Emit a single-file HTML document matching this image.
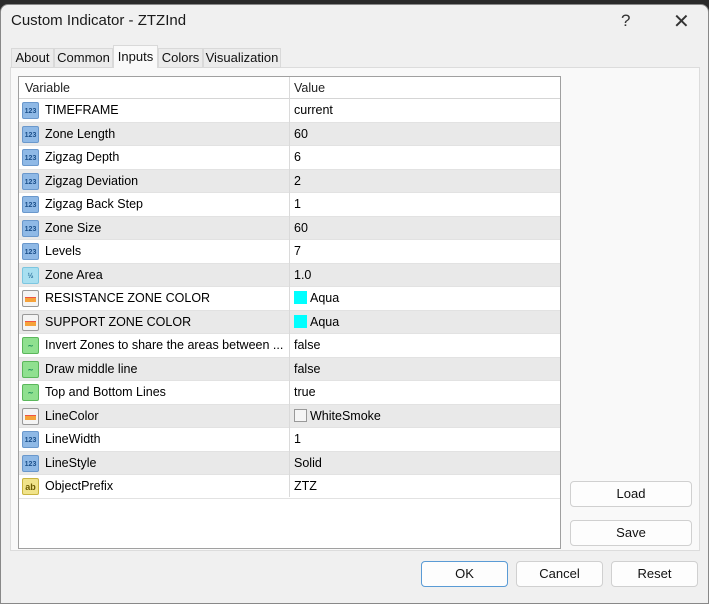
<!DOCTYPE html>
<html><head><style>
*{margin:0;padding:0;box-sizing:border-box}
body{width:709px;height:600px;background:#2a2a2a;font-family:"Liberation Sans",sans-serif;font-size:12.5px;color:#000;position:relative;overflow:hidden}
.dlg{position:absolute;left:0;top:4px;width:709px;height:600px;background:#f0f0f0;border-radius:8px 8px 0 0;border:1px solid #888}
.title{position:absolute;left:10px;top:7px;font-size:15px;color:#1a1a1a}
.q{position:absolute;left:620px;top:6px;font-size:17px;color:#333}
.x{position:absolute;left:672px;top:4px;font-size:20px;color:#333}
.tab{position:absolute;top:48px;height:20px;background:#ebebeb;border:1px solid #d9d9d9;font-size:13px;line-height:18px;text-align:center;color:#111}
.tab.sel{top:45px;height:23px;line-height:22px;background:#f9f9f9;border-bottom:none;z-index:2}
.panel{position:absolute;left:10px;top:67px;width:690px;height:484px;background:#f9f9f9;border:1px solid #dcdcdc}
.tbl{position:absolute;left:18px;top:76px;width:543px;height:473px;background:#fff;border:1px solid #a0a0a0;overflow:hidden}
.row{position:absolute;left:0;width:541px;height:23.5px;border-bottom:1px solid #e2e2e2}
.row.g{background:#e9e9e9}
.row span{position:absolute;top:4px}
.c1{left:26px}.c2{left:275px}
.hdr{position:absolute;left:0;top:0;width:541px;height:22px;border-bottom:1px solid #d5d5d5}
.hdr span{position:absolute;top:4px;color:#222}
.vl{position:absolute;left:270px;top:0;width:1px;height:420px;background:#dadada}
.ic{position:absolute;left:3px;top:3px;width:17px;height:17px;border-radius:2px;font-size:7px;font-weight:bold;text-align:center;line-height:17px}
.n{background:#8fb9e6;border:1px solid #6a98cc;color:#1b4f8a}
.f{background:#a8dff0;border:1px solid #7cc6e0;color:#2a6f9a}
.c{background:#f4f4f4;border:1px solid #999}
.c i{position:absolute;left:2px;top:6px;width:11px;height:5px;background:#f5a23a;border-top:1px solid #e54}
.b{background:#8fe08f;border:1px solid #5bb75b;color:#185}
.s{background:#f0e38a;border:1px solid #c9b440;color:#6a5a00;font-size:9px}
.sw{display:inline-block;width:13px;height:13px;vertical-align:-2px;margin-right:3px}
.btn{position:absolute;height:26px;background:#fdfdfd;border:1px solid #d0d0d0;border-radius:4px;text-align:center;line-height:24px;font-size:13px;color:#111}
</style></head><body>
<div class="dlg">
<div class="title">Custom Indicator - ZTZInd</div>
<div class="q">?</div><div class="x">✕</div>
</div>
<div class="panel"></div>
<div class="tab" style="left:11px;width:43px">About</div>
<div class="tab" style="left:54px;width:59px">Common</div>
<div class="tab sel" style="left:113px;width:45px">Inputs</div>
<div class="tab" style="left:158px;width:45px">Colors</div>
<div class="tab" style="left:203px;width:78px">Visualization</div>
<div class="tbl">
<div class="hdr"><span style="left:6px">Variable</span><span style="left:275px">Value</span></div>
<div class="row" style="top:22px"><div class="ic n">123</div><span class="c1">TIMEFRAME</span><span class="c2">current</span></div>
<div class="row g" style="top:45.5px"><div class="ic n">123</div><span class="c1">Zone Length</span><span class="c2">60</span></div>
<div class="row" style="top:69px"><div class="ic n">123</div><span class="c1">Zigzag Depth</span><span class="c2">6</span></div>
<div class="row g" style="top:92.5px"><div class="ic n">123</div><span class="c1">Zigzag Deviation</span><span class="c2">2</span></div>
<div class="row" style="top:116px"><div class="ic n">123</div><span class="c1">Zigzag Back Step</span><span class="c2">1</span></div>
<div class="row g" style="top:139.5px"><div class="ic n">123</div><span class="c1">Zone Size</span><span class="c2">60</span></div>
<div class="row" style="top:163px"><div class="ic n">123</div><span class="c1">Levels</span><span class="c2">7</span></div>
<div class="row g" style="top:186.5px"><div class="ic f">½</div><span class="c1">Zone Area</span><span class="c2">1.0</span></div>
<div class="row" style="top:210px"><div class="ic c"><i></i></div><span class="c1">RESISTANCE ZONE COLOR</span><span class="c2"><b class="sw" style="background:#0ff"></b>Aqua</span></div>
<div class="row g" style="top:233.5px"><div class="ic c"><i></i></div><span class="c1">SUPPORT ZONE COLOR</span><span class="c2"><b class="sw" style="background:#0ff"></b>Aqua</span></div>
<div class="row" style="top:257px"><div class="ic b">∼</div><span class="c1">Invert Zones to share the areas between ...</span><span class="c2">false</span></div>
<div class="row g" style="top:280.5px"><div class="ic b">∼</div><span class="c1">Draw middle line</span><span class="c2">false</span></div>
<div class="row" style="top:304px"><div class="ic b">∼</div><span class="c1">Top and Bottom Lines</span><span class="c2">true</span></div>
<div class="row g" style="top:327.5px"><div class="ic c"><i></i></div><span class="c1">LineColor</span><span class="c2"><b class="sw" style="background:#f5f5f5;border:1px solid #999"></b>WhiteSmoke</span></div>
<div class="row" style="top:351px"><div class="ic n">123</div><span class="c1">LineWidth</span><span class="c2">1</span></div>
<div class="row g" style="top:374.5px"><div class="ic n">123</div><span class="c1">LineStyle</span><span class="c2">Solid</span></div>
<div class="row" style="top:398px"><div class="ic s">ab</div><span class="c1">ObjectPrefix</span><span class="c2">ZTZ</span></div>
<div class="vl"></div>
</div>
<div class="btn" style="left:570px;top:481px;width:122px">Load</div>
<div class="btn" style="left:570px;top:520px;width:122px">Save</div>
<div class="btn" style="left:421px;top:561px;width:87px;border-color:#5a9bd5">OK</div>
<div class="btn" style="left:516px;top:561px;width:87px">Cancel</div>
<div class="btn" style="left:611px;top:561px;width:87px">Reset</div>
</body></html>
